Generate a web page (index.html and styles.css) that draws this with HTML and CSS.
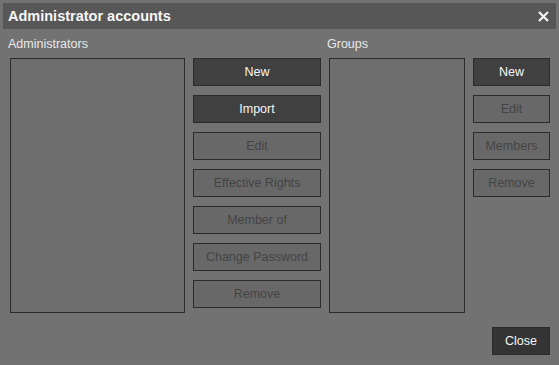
FILE: index.html
```html
<!DOCTYPE html>
<html lang="en">
<head>
    <meta charset="UTF-8">
    <meta name="viewport" content="width=device-width, initial-scale=1.0">
    <title>Administrator accounts</title>
    <link rel="stylesheet" href="styles.css">
</head>
<body>
    <div id="fenetre">
        <div id="titre">
            <span>Administrator accounts</span>
            <svg class="fermer" width="11" height="11" viewBox="0 0 11 11">
                <path d="M1 1 L10 10 M10 1 L1 10" stroke="#f4f4f4" stroke-width="2.2" fill="none"/>
            </svg>
        </div>
        <div id="contenu">
            <div class="section">
                <div class="etiquette">Administrators</div>
                <div class="ligne">
                    <div class="liste admins"></div>
                    <div class="boutons larges">
                        <button class="btn actif">New</button>
                        <button class="btn actif">Import</button>
                        <button class="btn">Edit</button>
                        <button class="btn">Effective Rights</button>
                        <button class="btn">Member of</button>
                        <button class="btn">Change Password</button>
                        <button class="btn">Remove</button>
                    </div>
                </div>
            </div>
            <div class="section">
                <div class="etiquette">Groups</div>
                <div class="ligne">
                    <div class="liste groupes"></div>
                    <div class="boutons etroits">
                        <button class="btn actif">New</button>
                        <button class="btn">Edit</button>
                        <button class="btn">Members</button>
                        <button class="btn">Remove</button>
                    </div>
                </div>
            </div>
        </div>
        <div id="pied">
            <button class="btn fermeture">Close</button>
        </div>
    </div>
</body>
</html>
```

FILE: styles.css
```css
body{
    margin: 0;
    background: #727272;
    font-family: "Liberation Sans", Arial, sans-serif;
}

#fenetre{
    width: 559px;
    height: 365px;
    padding: 3px;
    box-sizing: border-box;
}

#titre{
    height: 26px;
    background: #575757;
    color: #f6f6f6;
    font-weight: bold;
    font-size: 14.5px;
    line-height: 26px;
    padding-left: 5px;
    display: flex;
    justify-content: space-between;
    align-items: center;
}

.fermer{
    margin-right: 7px;
}

#contenu{
    display: flex;
    padding-left: 7px;
    padding-top: 8px;
    gap: 8px;
}

.etiquette{
    font-size: 12.5px;
    line-height: 14px;
    color: #e8e8e8;
    margin-left: -2px;
    height: 14px;
    margin-bottom: 7px;
}

.ligne{
    display: flex;
    gap: 8px;
}

.liste{
    height: 255px;
    background: #6e6e6e;
    border: 1px solid #2b2b2b;
    box-sizing: border-box;
}

.admins{
    width: 175px;
}

.groupes{
    width: 136px;
}

.boutons{
    display: flex;
    flex-direction: column;
    gap: 9px;
}

.larges .btn{
    width: 128px;
}

.etroits .btn{
    width: 77px;
}

.btn{
    height: 28px;
    box-sizing: border-box;
    border: 1px solid #2b2b2b;
    border-radius: 0;
    background: #686868;
    color: #444444;
    font-family: "Liberation Sans", Arial, sans-serif;
    font-size: 12.5px;
    padding: 0;
}

.actif{
    background: #404040;
    color: #f6f6f6;
}

#pied{
    display: flex;
    justify-content: flex-end;
    padding-top: 14px;
    padding-right: 6px;
}

.fermeture{
    width: 58px;
    background: #343434;
    color: #f6f6f6;
}
```
